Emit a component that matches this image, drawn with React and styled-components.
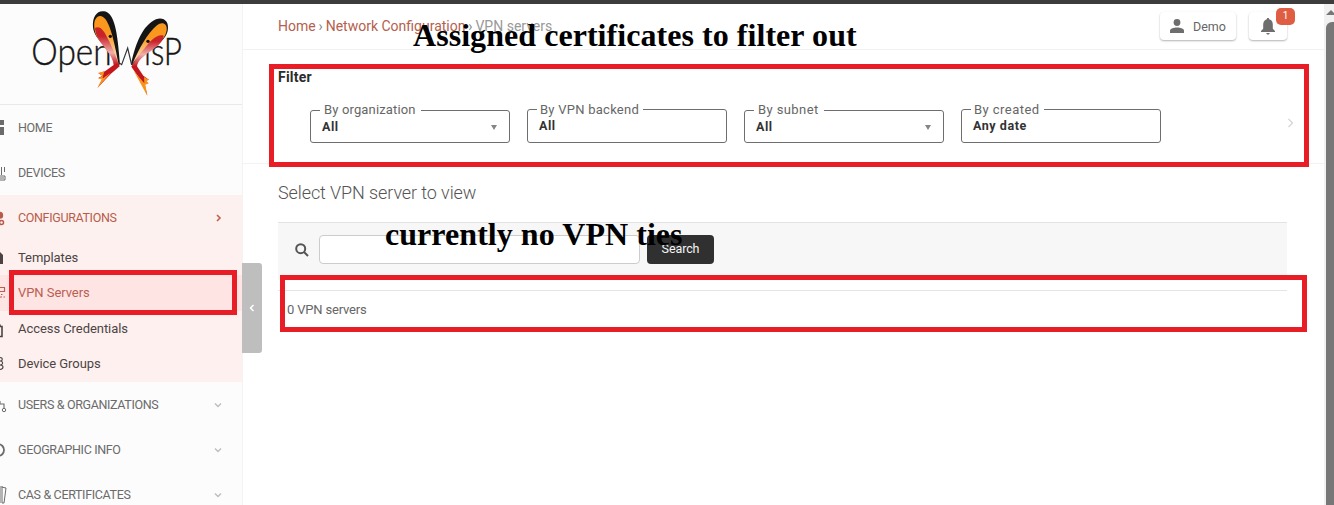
import React from 'react';
import styled, { createGlobalStyle } from 'styled-components';

const Global = createGlobalStyle`
  *{box-sizing:border-box}
  body{margin:0;background:#fff;font-family:Roboto,"Liberation Sans",sans-serif;overflow:hidden}
`;
const Screen = styled.div`
  position:relative;width:1334px;height:505px;overflow:hidden;display:flex;flex-direction:column;
  border-top:4px solid #3c3c3c;
`;
const Body = styled.div`display:flex;flex:1;min-height:0;`;
const Sidebar = styled.nav`
  width:243px;flex:none;background:#fcfcfc;border-right:1px solid #f3f3f3;overflow:hidden;
`;
const LogoBox = styled.div`height:101px;border-bottom:1px solid #e9e9e9;svg{display:block}`;
const Item = styled.div`
  height:${p => p.$h || 45}px;display:flex;align-items:center;font-size:${p => p.$size || 12.5}px;
  color:${p => p.$color || '#6b6b6b'};background:${p => p.$bg || 'transparent'};
  letter-spacing:${p => p.$ls ?? -0.35}px;padding-right:19px;padding-bottom:${p => p.$pb || 0}px;white-space:nowrap;
  >span{flex:1}
`;
const IconSlot = styled.svg`width:8px;height:24px;flex:none;margin-right:10px;fill:none;stroke:currentColor;stroke-width:1.4;overflow:hidden`;
const Chevron = styled.svg`width:10px;height:10px;fill:none;stroke:${p => p.$c || '#bdbdbd'};stroke-width:${p => p.$w || 1.4};`;
const Toggle = styled.div`
  width:20px;height:90px;margin-top:259px;margin-left:-1px;background:#bebebe;border-radius:0 3px 3px 0;flex:none;
  display:flex;align-items:center;justify-content:center;z-index:1;
`;
const Main = styled.main`flex:1;min-width:0;margin-left:-19px;display:flex;flex-direction:column;`;
const Header = styled.header`
  height:46px;border-bottom:1px solid #f1f1f1;display:flex;padding:8px 37px 0 35px;
`;
const Crumbs = styled.div`
  flex:1;display:flex;font-size:14px;line-height:16px;padding-top:6px;color:#999;white-space:nowrap;
  a{color:#b5604d}
  i{font-style:normal;width:10px;text-align:center;color:#888}
`;
const HeadButton = styled.div`
  position:relative;height:28px;width:${p => p.$w}px;margin-left:${p => p.$ml || 0}px;border-radius:4px;background:#fff;
  box-shadow:0 1px 2px rgba(0,0,0,.3);display:flex;align-items:center;justify-content:center;
  color:#666;font-size:12.500px;svg{fill:#6e6e6e;display:block}
`;
const PersonIcon = styled.svg`margin-right:9px;`;
const Badge = styled.b`
  position:absolute;left:27px;top:-4px;width:19px;height:17px;border-radius:5px;background:#df5d43;color:#fff;
  font-size:10px;font-weight:400;line-height:16px;text-align:center;
`;
const Filters = styled.section`height:114px;border-bottom:1px solid #f3f3f3;padding:18px 29px 0 35px;`;
const FilterTitle = styled.h2`margin:0;font-size:14px;line-height:18px;font-weight:700;color:#2c2c2c;letter-spacing:.2px;`;
const FilterRow = styled.div`display:flex;align-items:flex-end;gap:17px;padding:16px 0 0 32px;height:57px;`;
const Field = styled.fieldset`
  width:200px;height:${p => p.$tall ? 41 : 40}px;margin:0;border:1px solid #6e6e6e;border-radius:3px;padding:0 11px;min-width:0;
  display:flex;color:#333;font-size:12.5px;font-weight:700;letter-spacing:.55px;line-height:14px;
  legend{font-size:13px;font-weight:400;color:#666;letter-spacing:${p => p.$ls}px;padding:${p => p.$tall ? '1px 4px 0 3px' : '0 5px 0 4px'};line-height:${p => p.$tall ? 13 : 14}px;margin-left:-2px;white-space:nowrap}
  span{flex:1;margin-top:3px}
`;
const Caret = styled.i`border:3px solid transparent;border-top:5px solid #858585;border-bottom:0;height:5px;margin:8px 1px 0 0;`;
const NextArrow = styled.div`margin-left:auto;height:30px;`;
const Content = styled.section`padding:18px 37px 0 35px;`;
const Title = styled.h1`margin:0;font-size:18px;line-height:21px;font-weight:300;color:#555;letter-spacing:-.1px;white-space:nowrap;`;
const SearchBar = styled.div`
  height:58px;margin-top:19px;background:#f7f7f7;border-top:1px solid #e3e3e3;display:flex;align-items:center;padding:0 0 4px 17px;
  >svg{display:block;margin-right:10px}
`;
const Input = styled.div`width:321px;height:29px;border:1px solid #ccc;border-radius:4px;background:#fff;`;
const SearchButton = styled.div`
  width:67px;height:29px;margin-left:7px;border-radius:4px;background:#303030;color:#f4f4f4;font-size:12.5px;letter-spacing:-.1px;line-height:28px;text-align:center;
`;
const Result = styled.div`margin-top:10px;border-top:1px solid #e4e4e4;padding:11px 9px;font-size:13px;line-height:15px;letter-spacing:-.18px;color:#666;`;
const Scrollbar = styled.div`
  width:10px;background:#f1f1f1;flex:none;display:flex;flex-direction:column;align-items:flex-end;overflow:hidden;
  svg{display:block;flex:none}
`;
const Thumb = styled.div`width:8px;flex:1;background:#777;border-radius:6px 0 0 0;`;
const Frame = styled.div`
  position:absolute;left:${p => p.$x}px;top:${p => p.$y - 4}px;width:${p => p.$w}px;height:${p => p.$h}px;border:5px solid #e91d25;z-index:3;
`;
const Note = styled.div`
  position:absolute;left:${p => p.$x}px;top:${p => p.$y - 4}px;font:700 32px/34px "Liberation Serif",serif;color:#000;white-space:nowrap;z-index:4;
  letter-spacing:.05px;
`;

const Logo = () => (
  <svg width="242" height="100" viewBox="0 12 726 300">
    <defs>
      <linearGradient id="rl" x1="0" y1="0" x2="0" y2="1"><stop offset=".15" stopColor="#c9222b" /><stop offset=".42" stopColor="#f0b0ac" /><stop offset=".62" stopColor="#c4161e" /></linearGradient>
      <linearGradient id="rr" x1="0" y1="0" x2="0" y2="1"><stop offset=".1" stopColor="#c9222b" /><stop offset=".32" stopColor="#f0b0ac" /><stop offset=".52" stopColor="#c4161e" /></linearGradient>
      <linearGradient id="y" x1="0" y1="0" x2="0" y2="1"><stop offset=".35" stopColor="#fa981d" /><stop offset=".75" stopColor="#fccd94" /></linearGradient>
    </defs>
    <g fontFamily="Lato" fontWeight="300" fill="#151515" stroke="#151515" strokeWidth="1.2">
      <text x="94" y="196" fontSize="110" textLength="241" lengthAdjust="spacingAndGlyphs">Open</text>
      <text x="432" y="196" fontSize="110" textLength="114" lengthAdjust="spacingAndGlyphs">isP</text>
    </g>
    <path d="M279 82C276 48 293 30 313 34C344 41 352 92 360 193L354 196C332 145 283 122 279 82Z" fill="#151515" />
    <path d="M283 84C280 53 296 43 309 51C330 63 344 130 356 193C332 145 286 127 283 84Z" fill="url(#y)" />
    <path d="M285 84C300 76 311 90 324 117C340 148 349 174 359 199L332 222L293 263L309 235L295 234L307 227L295 220L315 214L341 195C338 155 288 130 285 84Z" fill="url(#rl)" />
    <path d="M332 218L292 265L305 238L294 236L308 227L294 219L313 214L307 236Z" fill="#f8941e" />
    <path d="M503 93C509 65 491 50 468 58C429 75 407 128 393 193L400 196C414 158 493 139 503 93Z" fill="#151515" />
    <path d="M500 91C503 70 485 64 471 76C443 98 415 150 397 193C424 148 494 138 500 91Z" fill="url(#y)" />
    <path d="M491 107C472 100 450 123 432 147C413 168 407 178 394 200L417 233L442 286L433 249L445 250L437 242L447 239L430 227L411 199C416 161 486 148 491 107Z" fill="url(#rr)" />
    <path d="M402 214L442 288L436 254L446 250L438 243L447 239L432 231L433 250Z" fill="#f8941e" />
    <path d="M359 190L365 194L383 144L395 195" fill="none" stroke="#333" strokeWidth="3.5" />
    <circle cx="331" cy="109" r="5" fill="#111" /><circle cx="444" cy="124" r="5" fill="#111" />
  </svg>
);
const Down = () => <Chevron viewBox="0 0 10 10"><path d="M2 3.5L5 6.5L8 3.5" /></Chevron>;

const icons = {
  home: <path d="M0 4h4v5H0zM0 11h4v8H0z" fill="currentColor" stroke="none" />,
  device: <path d="M0 15h5v4H0M1.500 14V6M4.500 6v5M0 17h4" strokeWidth="1" />,
  config: <><path d="M0 6.500C2 6.500 2.500 8 2.500 9.500S1.500 12 0 12z" fill="currentColor" /><circle cx="1.500" cy="16.500" r="2" strokeWidth="1.500" /></>,
  template: <path d="M-2 6h2l3 3v9h-5z" fill="currentColor" stroke="none" />,
  vpn: <path d="M0 7.500h4.500v4H0M0 17h2M3.500 17h1.500M1 14.500h1.500" strokeWidth="1.2" />,
  lock: <path d="M-3 9.500h5v10h-5M0 9.500V7.500" strokeWidth="1.6" />,
  groups: <path d="M0 6.500c3 0 3 3.500 0 3.500c3 0 4 3.500 0 4c4 0 4 4 0 4.500" strokeWidth="1.1" />,
  users: <><path d="M0 11h4v4M0 8v3" strokeWidth="1.1" /><circle cx="4" cy="17" r="1.700" strokeWidth="1" /></>,
  geo: <circle cx="-2" cy="12" r="6" strokeWidth="1.8" />,
  cert: <path d="M0 3v17M1.500 4l4.500 1l-2 15h-2M2 3v17" strokeWidth="1" />,
};
const Entry = ({ icon, children, end, ...p }) => (
  <Item {...p}><IconSlot viewBox="0 0 8 24">{icons[icon]}</IconSlot><span>{children}</span>{end}</Item>
);
const Sub = p => <Entry $size={13} $ls={-0.06} $color="#4c4444" $bg="#fdf0ef" $h={35} {...p} />;

export default function App() {
  return (
    <Screen>
      <Global />
      <Body>
        <Sidebar>
          <LogoBox><Logo /></LogoBox>
          <Entry icon="home">HOME</Entry>
          <Entry icon="device">DEVICES</Entry>
          <Entry icon="config" $color="#b85c4a" $bg="#fdf1f0" end={<Chevron $c="#c2604c" $w={1.6} viewBox="0 0 10 10"><path d="M4 2L7 5L4 8" /></Chevron>}>CONFIGURATIONS</Entry>
          <Sub icon="template">Templates</Sub>
          <Sub icon="vpn" $h={36} $pb={2} $bg="#ffe4e4" $color="#b9604f">VPN Servers</Sub>
          <Sub icon="lock">Access Credentials</Sub>
          <Sub icon="groups" $h={36} $pb={2}>Device Groups</Sub>
          <Entry icon="users" end={<Down />}>USERS &amp; ORGANIZATIONS</Entry>
          <Entry icon="geo" end={<Down />}>GEOGRAPHIC INFO</Entry>
          <Entry icon="cert" end={<Down />}>CAS &amp; CERTIFICATES</Entry>
        </Sidebar>
        <Toggle><Chevron $c="#fff" $w={1.5} viewBox="0 0 10 10"><path d="M6.500 2L3.500 5L6.500 8" /></Chevron></Toggle>
        <Main>
          <Header>
            <Crumbs><a>Home</a><i>›</i><a>Network Configuration</a><i>›</i><span>VPN servers</span></Crumbs>
            <HeadButton $w={76}>
              <PersonIcon width="14" height="14" viewBox="0 0 14 14"><circle cx="7" cy="3.500" r="3.400" /><path d="M0 14v-2.300C0 9.300 4 8.500 7 8.500s7 .8 7 3.200V14z" /></PersonIcon>
              Demo
            </HeadButton>
            <HeadButton $w={38} $ml={13}>
              <svg width="14" height="17" viewBox="0 0 14 17"><path d="M7 0c.8 0 1.200.5 1.200 1.300C10.600 2 11.800 4 11.800 6.500v4.300l2.200 2.300v.9H0v-.9l2.200-2.300V6.500C2.200 4 3.400 2 5.800 1.300C5.800.5 6.200 0 7 0zM5.300 15h3.400c-.2 1-.8 1.500-1.700 1.500S5.500 16 5.300 15z" /></svg>
              <Badge>1</Badge>
            </HeadButton>
          </Header>
          <Filters>
            <FilterTitle>Filter</FilterTitle>
            <FilterRow>
              <Field $ls={0.15}><legend>By organization</legend><span>All</span><Caret /></Field>
              <Field $tall $ls={0.25}><legend>By VPN backend</legend><span>All</span></Field>
              <Field $ls={0.4}><legend>By subnet</legend><span>All</span><Caret /></Field>
              <Field $tall $ls={0.45}><legend>By created</legend><span>Any date</span></Field>
              <NextArrow><Chevron $c="#d5d5d5" $w={1.3} viewBox="0 0 10 10"><path d="M3.500 1L7.500 5L3.500 9" /></Chevron></NextArrow>
            </FilterRow>
          </Filters>
          <Content>
            <Title>Select VPN server to view</Title>
            <SearchBar>
              <svg width="14" height="14" viewBox="0 0 14 14" fill="none" stroke="#555" strokeWidth="2"><circle cx="5.700" cy="5.700" r="4.500" /><path d="M9 9l4 4" /></svg>
              <Input /><SearchButton>Search</SearchButton>
            </SearchBar>
            <Result>0 VPN servers</Result>
          </Content>
        </Main>
        <Scrollbar>
          <svg width="8" height="18" viewBox="0 0 8 18"><path d="M0 11L5 6L10 11z" fill="#777" /></svg>
          <Thumb />
        </Scrollbar>
      </Body>
      <Frame $x={269} $y={64} $w={1040} $h={103} />
      <Frame $x={9} $y={270} $w={228} $h={45} />
      <Frame $x={280} $y={275} $w={1027} $h={57} />
      <Note $x={413} $y={18}>Assigned certificates to filter out</Note>
      <Note $x={385} $y={217}>currently no VPN ties</Note>
    </Screen>
  );
}
